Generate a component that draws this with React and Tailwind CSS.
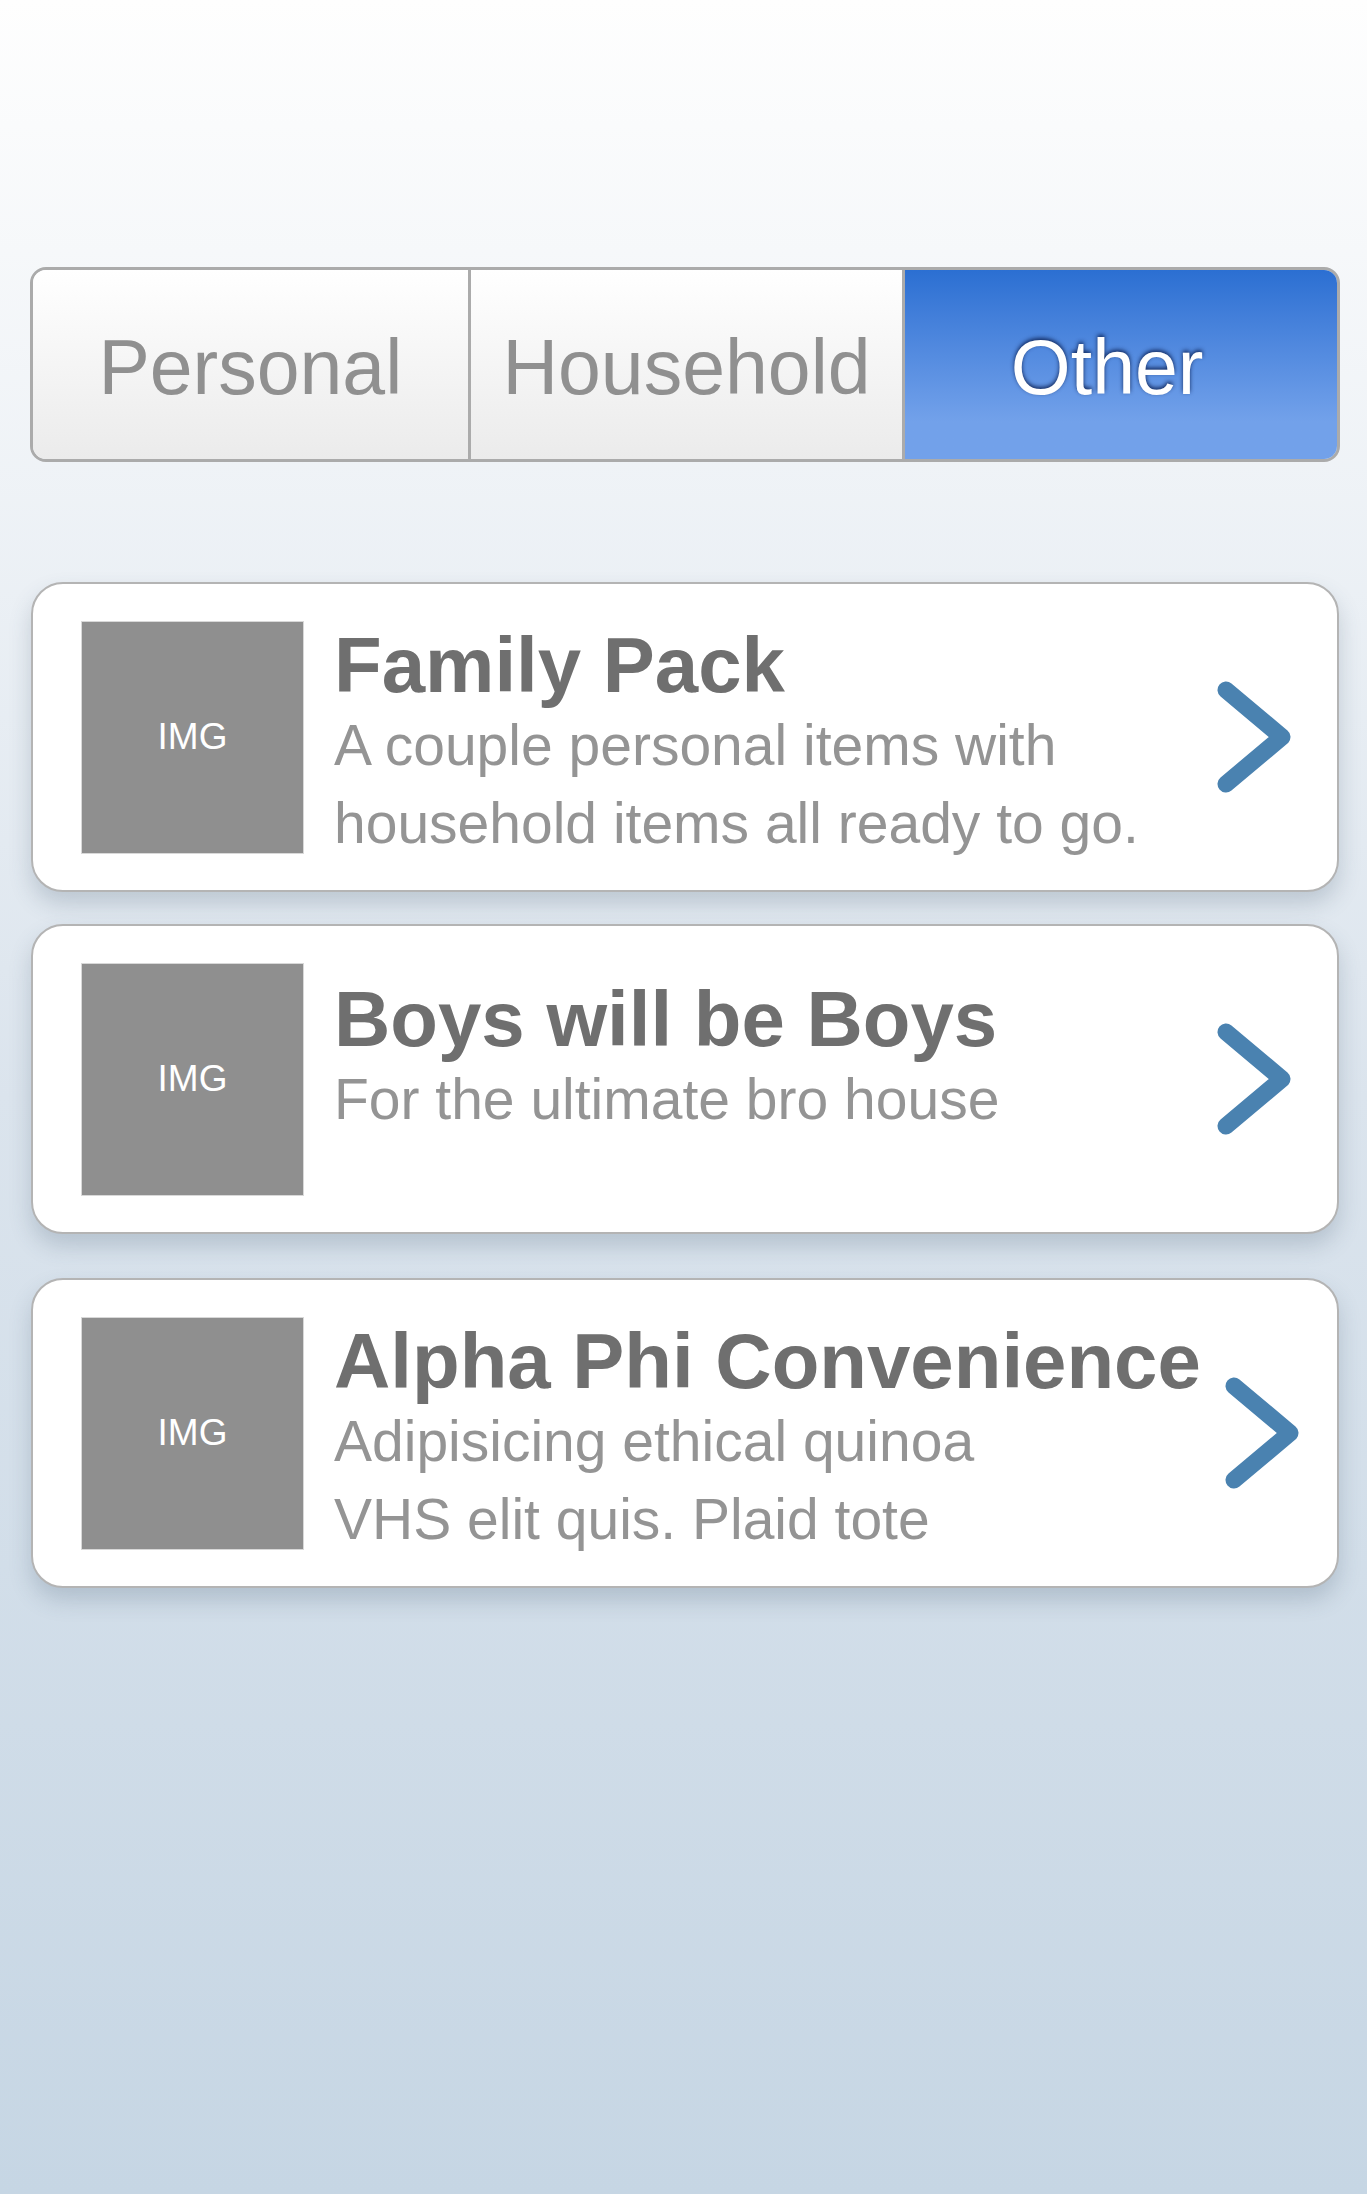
import React, { useState } from "react";

const tabs = ["Personal", "Household", "Other"];

const packs = [
  {
    title: "Family Pack",
    lines: ["A couple personal items with", "household items all ready to go."],
    textTop: "pt-[42px]",
    gap: "mt-[120px]",
  },
  {
    title: "Boys will be Boys",
    lines: ["For the ultimate bro house"],
    textTop: "pt-[54px]",
    gap: "mt-[32px]",
  },
  {
    title: "Alpha Phi Convenience",
    lines: ["Adipisicing ethical quinoa", "VHS elit quis. Plaid tote"],
    textTop: "pt-[42px]",
    gap: "mt-[44px]",
  },
];

function Chevron() {
  return (
    <svg width="76" height="112" viewBox="0 0 76 112" className="shrink-0 ml-[24px]">
      <path
        d="M9 9 L65 56 L9 103"
        fill="none"
        stroke="#4a82b0"
        strokeWidth="17"
        strokeLinecap="round"
        strokeLinejoin="round"
      />
    </svg>
  );
}

export default function App() {
  const [active, setActive] = useState(2);

  return (
    <div
      className="min-h-screen w-full pl-[30px] pr-[27px] pt-[267px] pb-[40px] bg-linear-to-b from-[#fefefe] via-[#dbe4ed] via-50% to-[#c6d6e4]"
      style={{ fontFamily: '"Liberation Sans", Arial, sans-serif' }}
    >
      {/* Segmented control */}
      <div className="grid grid-cols-3 h-[195px] border-[3px] border-[#ababab] rounded-[16px] overflow-hidden">
        {tabs.map((tab, i) => (
          <button
            key={tab}
            onClick={() => setActive(i)}
            className={`min-w-0 flex items-center justify-center pt-[5px] text-[77px] leading-none ${
              i > 0 ? "border-l-[3px] border-[#ababab]" : ""
            } ${
              active === i
                ? "pr-[28px] bg-linear-to-b from-[#2b6fd2] to-[#72a1ea] to-80% text-white [text-shadow:0_-2px_4px_rgba(10,30,80,0.9)]"
                : "bg-linear-to-b from-white to-[#ebebeb] text-[#909090]"
            }`}
          >
            {tab}
          </button>
        ))}
      </div>

      {/* Pack list */}
      <div className="flex flex-col mx-[1px]">
        {packs.map((pack) => (
          <div
            key={pack.title}
            className={`${pack.gap} h-[310px] flex items-center bg-white border-2 border-[#b4b4b4] rounded-[32px] pl-[48px] pr-[44px] shadow-[0_12px_22px_rgba(60,80,105,0.22)]`}
          >
            <div className="shrink-0 w-[223px] h-[233px] bg-[#8f8f8f] border border-[#d8d8d8] flex items-center justify-center text-white text-[37px]">
              IMG
            </div>
            <div className={`flex-1 self-start ml-[30px] ${pack.textTop}`}>
              <div className="text-[78px] leading-[78px] font-bold text-[#6f6f6f] whitespace-nowrap">
                {pack.title}
              </div>
              <div className="mt-[2px] text-[57px] leading-[78px] text-[#949494] whitespace-nowrap">
                {pack.lines.map((line) => (
                  <div key={line}>{line}</div>
                ))}
              </div>
            </div>
            <Chevron />
          </div>
        ))}
      </div>
    </div>
  );
}
